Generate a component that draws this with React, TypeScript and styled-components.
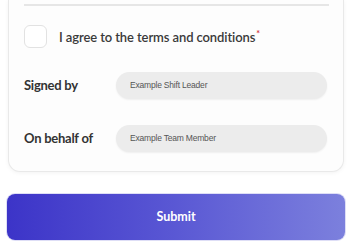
import React from 'react';
import styled, { createGlobalStyle } from 'styled-components';

const GlobalStyle = createGlobalStyle`
  html, body {
    margin: 0;
    padding: 0;
    background: #ffffff;
  }
  body {
    font-family: 'Lato', 'Noto Sans', sans-serif;
  }
`;

const Page = styled.div`
  width: 350px;
  height: 246px;
  overflow: hidden;
  padding: 0 6px 0 8px;
  box-sizing: border-box;
`;

const Card = styled.div`
  background: #fdfdfd;
  border: 1px solid #e9e9e9;
  border-top: none;
  border-radius: 0 0 12px 12px;
  padding: 4px 16px 19px 15px;
  box-shadow: 0 1px 4px rgb(0 0 0 / 5%);
`;

const Divider = styled.div`
  height: 1.5px;
  background: #e6e6e6;
  margin-right: -2px;
`;

const AgreeRow = styled.label`
  display: flex;
  align-items: center;
  gap: 12px;
  margin-top: 19px;
`;

const Checkbox = styled.span`
  box-sizing: border-box;
  width: 23px;
  height: 23px;
  border: 1px solid #e2e2e2;
  border-radius: 6px;
  background: #ffffff;
  flex-shrink: 0;
`;

const AgreeText = styled.span`
  font-size: 13px;
  font-weight: 600;
  color: #3a3a3a;
  letter-spacing: -0.1px;
  padding-top: 2px;
`;

const Required = styled.sup`
  color: #d0303a;
  font-size: 9px;
  margin-left: 1px;
`;

const FieldRow = styled.div<{ $top: number }>`
  display: flex;
  align-items: center;
  margin-top: ${(p) => p.$top}px;
`;

const FieldLabel = styled.span`
  width: 92px;
  flex-shrink: 0;
  font-size: 13px;
  font-weight: 700;
  color: #333333;
  letter-spacing: -0.25px;
`;

const FieldValue = styled.div`
  flex: 1;
  height: 27px;
  display: flex;
  align-items: center;
  padding-left: 14px;
  border-radius: 14px;
  background: #ececec;
  box-shadow: 0 1px 2px rgb(0 0 0 / 6%);
  font-family: 'Liberation Sans', Arial, sans-serif;
  font-size: 8.5px;
  letter-spacing: -0.2px;
  color: #555555;
`;

const SubmitButton = styled.button`
  display: block;
  width: calc(100% + 2px);
  margin: 22px 0 0 -1px;
  height: 46px;
  border: none;
  border-radius: 8px;
  background: linear-gradient(90deg, #3c34c8 0%, #5a58d4 50%, #7c80dd 100%);
  box-shadow: 0 0 0 1px rgb(160 160 230 / 35%);
  color: #ffffff;
  font-family: 'Lato', 'Noto Sans', sans-serif;
  font-size: 12.5px;
  font-weight: 700;
  cursor: pointer;
`;

const App: React.FC = () => {
  return (
    <>
      <GlobalStyle />
      <Page>
        <Card>
          <Divider />
          <AgreeRow>
            <Checkbox />
            <AgreeText>
              I agree to the terms and conditions<Required>*</Required>
            </AgreeText>
          </AgreeRow>
          <FieldRow $top={24}>
            <FieldLabel>Signed by</FieldLabel>
            <FieldValue>Example Shift Leader</FieldValue>
          </FieldRow>
          <FieldRow $top={26}>
            <FieldLabel>On behalf of</FieldLabel>
            <FieldValue>Example Team Member</FieldValue>
          </FieldRow>
        </Card>
        <SubmitButton type="button">Submit</SubmitButton>
      </Page>
    </>
  );
};

export default App;
